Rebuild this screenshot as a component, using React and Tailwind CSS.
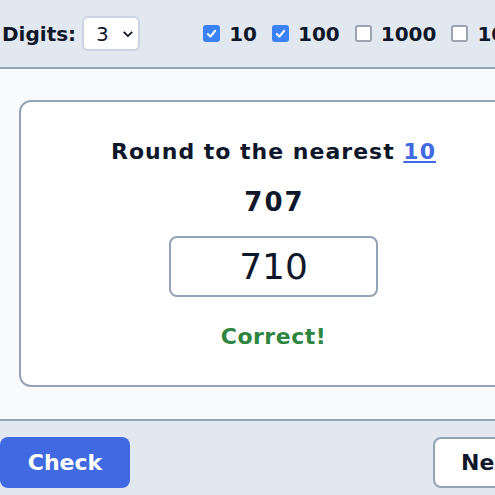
import { useState } from 'react';

const PLACES = [10, 100, 1000, 10000];

function Checkbox({ checked, onChange }) {
  return (
    <span
      onClick={onChange}
      className={
        checked
          ? 'w-[17px] h-[17px] rounded-[3px] bg-[#3b82f6] flex items-center justify-center'
          : 'w-[17px] h-[17px] rounded-[3px] bg-white border-2 border-[#9ca3af]'
      }
    >
      {checked && (
        <svg width="11" height="11" viewBox="0 0 12 12">
          <path d="M2 6.5l2.8 2.8L10 3" fill="none" stroke="white" strokeWidth="2.2" strokeLinecap="round" strokeLinejoin="round" />
        </svg>
      )}
    </span>
  );
}

export default function App() {
  const [digits, setDigits] = useState('3');
  const [places, setPlaces] = useState({ 10: true, 100: true, 1000: false, 10000: false });
  const [answer, setAnswer] = useState('710');

  const toggle = p => setPlaces(prev => ({ ...prev, [p]: !prev[p] }));

  return (
    <div className="w-full overflow-hidden font-['DejaVu_Sans',Verdana,sans-serif] text-[#0f172a]">
      <div className="w-[547px]">
        {/* settings bar */}
        <div className="h-[69px] bg-[#e2e8f0] border-b-2 border-[#94a3b8] flex items-center pl-[2px]">
          <span className="text-[20px] font-bold">Digits:</span>
          <select
            value={digits}
            onChange={e => setDigits(e.target.value)}
            className="ml-[6px] w-[62px] h-[35px] bg-white border-2 border-[#cbd5e1] rounded-md pl-[12px] text-[20px] appearance-none"
          >
            <option value="2">2</option>
            <option value="3">3</option>
            <option value="4">4</option>
          </select>
          <svg className="-ml-[18px] pointer-events-none" width="13" height="13" viewBox="0 0 14 14">
            <path d="M2 5l5 5 5-5" fill="none" stroke="#0f172a" strokeWidth="2.2" />
          </svg>
          <div className="ml-[69px] flex items-center gap-[15px]">
            {PLACES.map(p => (
              <label key={p} className="flex items-center gap-[9px] text-[20px] font-bold">
                <Checkbox checked={places[p]} onChange={() => toggle(p)} />
                {p}
              </label>
            ))}
          </div>
        </div>

        {/* question area */}
        <div className="bg-[#f8fafc] border-b-2 border-[#94a3b8] px-[19px] pt-[31px] pb-[32px]">
          <div className="bg-white border-2 border-[#94a3b8] rounded-xl h-[287px] flex flex-col items-center pt-[36px]">
            <div className="text-[22px] font-bold leading-[28px] tracking-[1px]">
              Round to the nearest <a href="#" className="text-[#4169e1] underline">10</a>
            </div>
            <div className="mt-[20px] text-[26px] font-bold leading-[32px] tracking-[2px] pl-[2px]">707</div>
            <input
              value={answer}
              onChange={e => setAnswer(e.target.value)}
              className="mt-[18px] w-[209px] h-[61px] border-2 border-[#94a3b8] rounded-lg text-center text-[36px] bg-white"
            />
            <div className="mt-[26px] text-[22px] font-bold text-[#2e8540] leading-[28px] tracking-[0.5px]">Correct!</div>
          </div>
        </div>

        {/* actions */}
        <div className="bg-[#e2e8f0] h-[80px] pt-[16px] flex justify-between">
          <button className="w-[130px] h-[51px] bg-[#4169e1] text-white text-[22px] font-bold rounded-lg">Check</button>
          <button className="w-[114px] h-[51px] bg-white border-2 border-[#94a3b8] rounded-lg text-[22px] font-bold">Next</button>
        </div>
      </div>
    </div>
  );
}
